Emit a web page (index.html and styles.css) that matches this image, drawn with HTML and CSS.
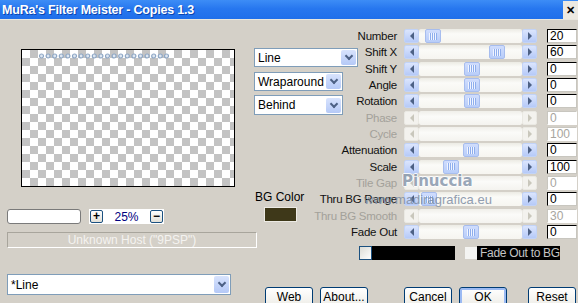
FILE: index.html
```html
<!DOCTYPE html>
<html lang="en">
    <head>
        <meta charset="UTF-8" />
        <title>MuRa's Filter Meister - Copies 1.3</title>
        <link rel="stylesheet" href="styles.css">
    </head>
    <body>
        <div class="titlebar">
            <span class="title">MuRa's Filter Meister - Copies 1.3</span>
            <span class="close">&#x2715;</span>
        </div>

        <div class="main">
            <div class="left">
                <div class="preview">
                    <svg class="dots" width="130" height="6" viewBox="0 0 130 6">
                        <g fill="#dfe7f1" stroke="#8ea7c5" stroke-width="1.2">
                            <circle cx="2.5" cy="3" r="2"/><circle cx="9.1" cy="3" r="2"/>
                            <circle cx="15.7" cy="3" r="2"/><circle cx="22.3" cy="3" r="2"/>
                            <circle cx="28.9" cy="3" r="2"/><circle cx="35.5" cy="3" r="2"/>
                            <circle cx="42.1" cy="3" r="2"/><circle cx="48.7" cy="3" r="2"/>
                            <circle cx="55.3" cy="3" r="2"/><circle cx="61.9" cy="3" r="2"/>
                            <circle cx="68.5" cy="3" r="2"/><circle cx="75.1" cy="3" r="2"/>
                            <circle cx="81.7" cy="3" r="2"/><circle cx="88.3" cy="3" r="2"/>
                            <circle cx="94.9" cy="3" r="2"/><circle cx="101.5" cy="3" r="2"/>
                            <circle cx="108.1" cy="3" r="2"/><circle cx="114.7" cy="3" r="2"/>
                            <circle cx="121.3" cy="3" r="2"/><circle cx="127.5" cy="3" r="2"/>
                        </g>
                    </svg>
                </div>
                <div class="zoom-row">
                    <div class="zoom-input"></div>
                    <div class="zoom-ctrl">
                        <span class="mini-btn">+</span>
                        <span class="zoom-val">25%</span>
                        <span class="mini-btn">&minus;</span>
                    </div>
                </div>
                <div class="status">Unknown Host ("9PSP")</div>
            </div>

            <div class="middle">
                <div class="select wide"><span>Line</span><i class="drop"></i></div>
                <div class="select"><span>Wraparound</span><i class="drop"></i></div>
                <div class="select"><span>Behind</span><i class="drop"></i></div>
                <div class="bg-label">BG Color</div>
                <div class="swatch"></div>
            </div>

            <div class="controls">
                <div class="row">
                    <span class="name">Number</span>
                    <div class="scroll"><span class="arrow left"></span><div class="track"><span class="thumb" style="margin-left: 6px"></span></div><span class="arrow right"></span></div>
                    <div class="value">20</div>
                </div>
                <div class="row">
                    <span class="name">Shift X</span>
                    <div class="scroll"><span class="arrow left"></span><div class="track"><span class="thumb" style="margin-left: 70px"></span></div><span class="arrow right"></span></div>
                    <div class="value">60</div>
                </div>
                <div class="row">
                    <span class="name">Shift Y</span>
                    <div class="scroll"><span class="arrow left"></span><div class="track"><span class="thumb" style="margin-left: 45px"></span></div><span class="arrow right"></span></div>
                    <div class="value">0</div>
                </div>
                <div class="row">
                    <span class="name">Angle</span>
                    <div class="scroll"><span class="arrow left"></span><div class="track"><span class="thumb" style="margin-left: 45px"></span></div><span class="arrow right"></span></div>
                    <div class="value">0</div>
                </div>
                <div class="row">
                    <span class="name">Rotation</span>
                    <div class="scroll"><span class="arrow left"></span><div class="track"><span class="thumb" style="margin-left: 45px"></span></div><span class="arrow right"></span></div>
                    <div class="value">0</div>
                </div>
                <div class="row disabled">
                    <span class="name">Phase</span>
                    <div class="scroll"><span class="arrow left"></span><div class="track"></div><span class="arrow right"></span></div>
                    <div class="value">0</div>
                </div>
                <div class="row disabled">
                    <span class="name">Cycle</span>
                    <div class="scroll"><span class="arrow left"></span><div class="track"></div><span class="arrow right"></span></div>
                    <div class="value">100</div>
                </div>
                <div class="row">
                    <span class="name">Attenuation</span>
                    <div class="scroll"><span class="arrow left"></span><div class="track"><span class="thumb" style="margin-left: 44px"></span></div><span class="arrow right"></span></div>
                    <div class="value">0</div>
                </div>
                <div class="row">
                    <span class="name">Scale</span>
                    <div class="scroll"><span class="arrow left"></span><div class="track"><span class="thumb" style="margin-left: 24px"></span></div><span class="arrow right"></span></div>
                    <div class="value">100</div>
                </div>
                <div class="row disabled">
                    <span class="name">Tile Gap</span>
                    <div class="scroll"><span class="arrow left"></span><div class="track"></div><span class="arrow right"></span></div>
                    <div class="value">0</div>
                </div>
                <div class="row">
                    <span class="name">Thru BG Range</span>
                    <div class="scroll"><span class="arrow left"></span><div class="track"><span class="thumb" style="margin-left: 2px"></span></div><span class="arrow right"></span></div>
                    <div class="value">0</div>
                </div>
                <div class="row disabled">
                    <span class="name">Thru BG Smooth</span>
                    <div class="scroll"><span class="arrow left"></span><div class="track"></div><span class="arrow right"></span></div>
                    <div class="value">30</div>
                </div>
                <div class="row">
                    <span class="name">Fade Out</span>
                    <div class="scroll"><span class="arrow left"></span><div class="track"><span class="thumb" style="margin-left: 44px"></span></div><span class="arrow right"></span></div>
                    <div class="value">0</div>
                </div>

                <div class="checks">
                    <div class="blackbar"><span class="cb"></span></div>
                    <div class="fade"><span class="cb plain"></span><span class="fade-label">Fade Out to BG</span></div>
                </div>
            </div>
        </div>

        <div class="bottom">
            <div class="select long"><span>*Line</span><i class="drop"></i></div>
            <div class="buttons">
                <span class="btn">Web</span>
                <span class="btn">About...</span>
                <span class="btn gap">Cancel</span>
                <span class="btn default">OK</span>
                <span class="btn reset">Reset</span>
            </div>
        </div>

        <div class="watermark">
            <div class="wm-name">Pinuccia</div>
            <div class="wm-url">www.madiragrafica.eu</div>
        </div>
    </body>
</html>
```

FILE: styles.css
```css
body {
    margin: 0;
    width: 578px;
    height: 303px;
    overflow: hidden;
    position: relative;
    background: #d4d0c8;
    font-family: "Liberation Sans", Arial, sans-serif;
    font-size: 11px;
    color: #000;
}
.titlebar {
    height: 19px;
    display: flex;
    justify-content: space-between;
    align-items: center;
    background: linear-gradient(to bottom, #3d8df6 0%, #2777ef 45%, #1f6fea 100%);
    border-bottom: 1px solid #e8e6de;
}
.title {
    color: #fff;
    font-weight: bold;
    font-size: 12.5px;
    padding-left: 2px;
    letter-spacing: -0.2px;
    text-shadow: 1px 1px 0 #0b45b0;
}
.close {
    width: 15px;
    height: 18px;
    margin-top: 1px;
    background: #ece9e2;
    display: flex;
    align-items: center;
    justify-content: center;
    font-size: 11px;
    font-weight: bold;
}
.main {
    display: flex;
    height: 246px;
    padding-left: 7px;
}
.left {
    width: 250px;
    flex: none;
}
.preview {
    margin: 29px 0 0 14px;
    width: 212px;
    height: 136px;
    border: 1px solid #000;
    background-color: #fff;
    background-image: conic-gradient(#c3c3c3 25%, #fff 0 50%, #c3c3c3 0 75%, #fff 0);
    background-size: 16px 16px;
}
.dots {
    display: block;
    margin: 3px 0 0 17px;
}
.zoom-row {
    display: flex;
    align-items: center;
    height: 15px;
    margin-top: 22px;
}
.zoom-input {
    width: 72px;
    height: 13px;
    border: 1px solid #7a7a7a;
    border-radius: 3px;
    background: #fff;
}
.zoom-ctrl {
    display: flex;
    align-items: center;
    justify-content: space-between;
    width: 75px;
    height: 15px;
    margin-left: 8px;
    background: #fff;
}
.mini-btn {
    width: 11px;
    height: 11px;
    margin: 0 1px;
    border: 1px solid #1c5180;
    border-radius: 2px;
    background: linear-gradient(#fff, #e2e0d8);
    font-size: 12px;
    font-weight: bold;
    line-height: 11px;
    text-align: center;
}
.zoom-val {
    color: #000080;
    font-size: 12px;
}
.status {
    margin-top: 8px;
    width: 248px;
    height: 14px;
    border: 1px solid;
    border-color: #a8a59c #fff #fff #a8a59c;
    color: #f4f3f0;
    text-align: center;
    font-size: 12px;
    line-height: 14px;
}
.middle {
    width: 104px;
    flex: none;
    margin-left: -3px;
    padding-top: 28px;
    display: flex;
    flex-direction: column;
}
.select {
    box-sizing: border-box;
    width: 89px;
    height: 19px;
    border: 1px solid #7f9db9;
    background: #fff;
    display: flex;
    align-items: center;
    justify-content: space-between;
    padding-left: 3px;
    font-size: 12px;
}
.select.wide {
    width: 104px;
}
.select + .select {
    margin-top: 5px;
}
.select + .select + .select {
    margin-top: 4px;
    height: 20px;
}
.drop {
    width: 15px;
    height: 15px;
    margin-right: 1px;
    border-radius: 2px;
    background: linear-gradient(#d8e3fd, #b5c9f7);
    display: flex;
    align-items: center;
    justify-content: center;
}
.drop::before {
    content: "";
    width: 4px;
    height: 4px;
    margin-top: -3px;
    border-right: 2px solid #4d6185;
    border-bottom: 2px solid #4d6185;
    transform: rotate(45deg);
}
.bg-label {
    margin-top: 75px;
    margin-left: 1px;
    font-size: 12px;
}
.swatch {
    margin: 3px 0 0 10px;
    width: 31px;
    height: 13px;
    background: #3e3819;
    border: 1px solid #eceae4;
}
.controls {
    width: 219px;
    flex: none;
    padding-top: 8px;
}
.row {
    display: flex;
    align-items: center;
    height: 16.33px;
}
.name {
    width: 39px;
    flex: none;
    display: flex;
    justify-content: flex-end;
    white-space: nowrap;
    font-size: 11.5px;
    letter-spacing: -0.25px;
    color: #111;
}
.scroll {
    width: 133px;
    height: 14px;
    margin-left: 7px;
    flex: none;
    display: flex;
}
.track {
    flex: 1;
    display: flex;
    background: linear-gradient(to bottom, #ecebe4, #fbfbf8 35%, #f6f5f0);
    border-radius: 2px;
}
.thumb {
    width: 14px;
    height: 12px;
    border: 1px solid #a7bdee;
    border-radius: 2px;
    background: linear-gradient(to bottom, #d0ddfd, #b8cdf9);
    display: flex;
    align-items: center;
    justify-content: center;
}
.thumb::before {
    content: "";
    width: 8px;
    height: 7px;
    background: repeating-linear-gradient(to right, #f0f4ff 0 1px, #8eaeed 1px 2px);
}
.arrow {
    width: 15px;
    height: 14px;
    box-sizing: border-box;
    border: 1px solid #c2d3f7;
    border-radius: 2px;
    background: linear-gradient(to bottom, #dbe5fd, #b6caf8);
    display: flex;
    align-items: center;
    justify-content: center;
}
.arrow::before {
    content: "";
    border-top: 4px solid transparent;
    border-bottom: 4px solid transparent;
}
.arrow.left::before {
    border-right: 4px solid #4d6185;
}
.arrow.right::before {
    border-left: 4px solid #4d6185;
}
.value {
    width: 27px;
    height: 12px;
    margin-left: 10px;
    padding-left: 2px;
    border: 1px solid;
    border-color: #000 #c8c6bf #c8c6bf #000;
    background: #fff;
    font-size: 12px;
    line-height: 12px;
}
.disabled .name {
    color: #a3a19a;
}
.disabled .track {
    background: linear-gradient(to bottom, #f0efea, #fbfbf9 40%, #f4f3ef);
}
.disabled .arrow {
    border-color: #eae9e3;
    background: #f3f2ee;
}
.disabled .arrow.left::before {
    border-right-color: #c9c7bc;
}
.disabled .arrow.right::before {
    border-left-color: #c9c7bc;
}
.disabled .value {
    color: #a7a59e;
    border-color: #c8c6bf #fff #fff #c8c6bf;
}
.checks {
    display: flex;
    margin: 6px 0 0 1px;
    height: 14px;
}
.blackbar {
    width: 96px;
    height: 14px;
    background: #000;
}
.cb {
    display: block;
    width: 11px;
    height: 12px;
    border: 1px solid #1c5180;
    background: linear-gradient(135deg, #dcdcd6, #fff);
}
.fade {
    display: flex;
    align-items: center;
    margin-left: 10px;
}
.cb.plain {
    width: 12px;
    height: 12px;
    border: 0;
    background: #f4f4f2;
}
.fade-label {
    width: 80px;
    height: 14px;
    padding-left: 3px;
    background: #000;
    color: #c4c4c4;
    font-size: 12px;
    letter-spacing: -0.3px;
    line-height: 14px;
    white-space: nowrap;
    overflow: hidden;
}
.bottom {
    display: flex;
    padding-left: 7px;
    margin-top: 8px;
}
.select.long {
    width: 224px;
    height: 21px;
}
.select.long .drop {
    height: 17px;
}
.buttons {
    display: flex;
    margin: 13px 0 0 34px;
}
.btn {
    box-sizing: border-box;
    width: 48px;
    height: 23px;
    padding-top: 3px;
    border: 1px solid #003c74;
    border-radius: 3px;
    background: linear-gradient(to bottom, #fff, #f0efea 75%, #dcd8cc);
    text-align: center;
    font-size: 12px;
    line-height: 12px;
}
.btn + .btn {
    margin-left: 7px;
}
.btn.gap {
    margin-left: 36px;
}
.btn.default {
    box-shadow: inset 0 0 0 2px #9bbaf3;
}
.btn.reset {
    margin-left: 21px;
}
.watermark {
    position: absolute;
    left: 364px;
    top: 172px;
    pointer-events: none;
}
.wm-name {
    margin-left: 38px;
    font-family: "DejaVu Sans", sans-serif;
    font-weight: bold;
    font-size: 15px;
    color: #8a99ae;
    text-shadow: 1px 0 0 #fff, -1px 0 0 #fff, 0 1px 0 #fff, 0 -1px 0 #fff;
    opacity: 0.85;
}
.wm-url {
    margin-top: 2px;
    font-size: 13px;
    color: #7f8ea4;
    opacity: 0.85;
}
```
